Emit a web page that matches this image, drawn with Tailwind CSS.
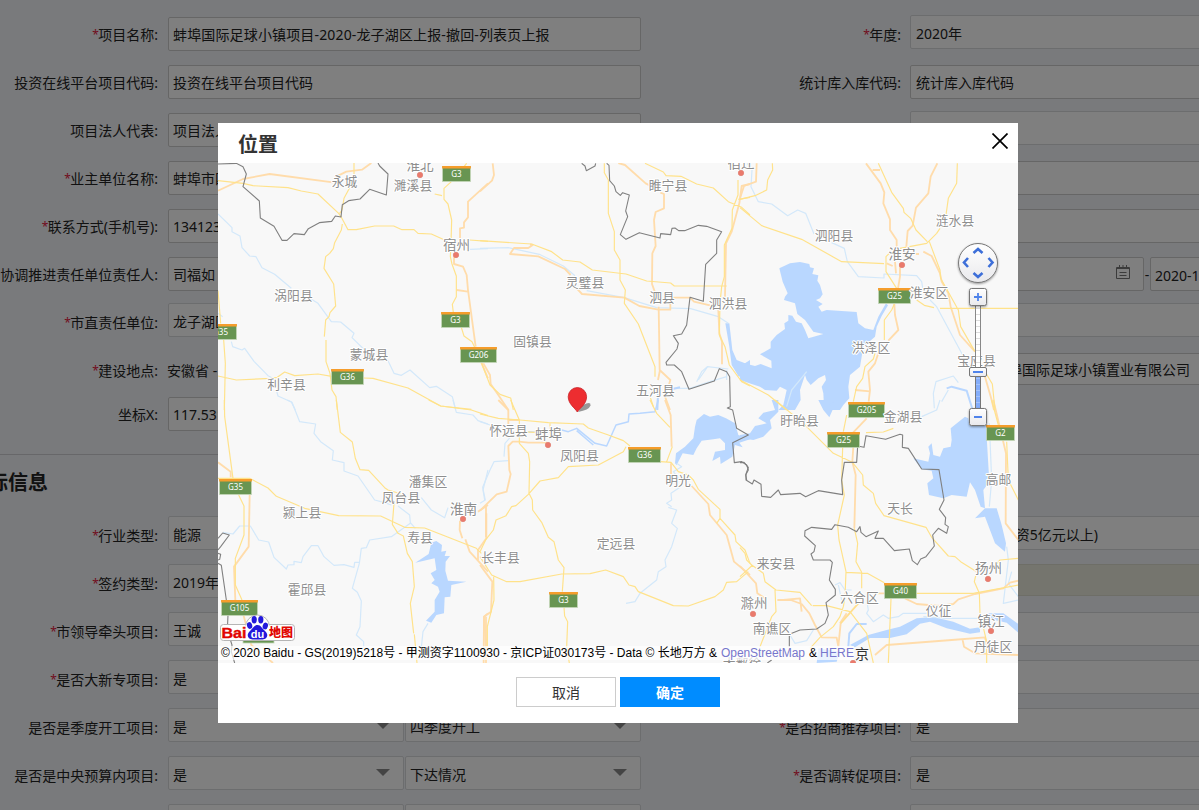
<!DOCTYPE html>
<html lang="zh-CN">
<head>
<meta charset="utf-8">
<title>位置</title>
<script src="https://cdn.jsdelivr.net/npm/@tailwindcss/browser@4"></script>
</head>
<body class="h-[810px] w-[1199px] overflow-hidden bg-[#f3f5f8] font-['Noto_Sans','Noto_Sans_CJK_SC',sans-serif] text-[14px] leading-[20px] text-[#222]">
<main class="flex h-[810px] overflow-hidden [&_i]:w-[6px] [&_i]:text-[12px] [&_label]:translate-y-px">
  <section class="flex w-[641px] shrink-0 flex-col">
    <div class="mt-[17px] flex h-[34px] shrink-0 items-center gap-[10px]"><label class="flex w-[158px] shrink-0 justify-end whitespace-nowrap"><i class="not-italic text-[#e3173e]">*</i>项目名称:</label><div class="flex h-full flex-1 items-center rounded-[2px] border border-[#ccc] bg-white px-[4px] pt-[2px]"><span class="tracking-[0.15px]">蚌埠国际足球小镇项目-2020-龙子湖区上报-撤回-列表页上报</span></div></div>
    <div class="mt-[14px] flex h-[34px] shrink-0 items-center gap-[10px]"><label class="flex w-[158px] shrink-0 justify-end whitespace-nowrap">投资在线平台项目代码:</label><div class="flex h-full flex-1 items-center rounded-[2px] border border-[#ccc] bg-white px-[4px] pt-[2px]">投资在线平台项目代码</div></div>
    <div class="mt-[14px] flex h-[34px] shrink-0 items-center gap-[10px]"><label class="flex w-[158px] shrink-0 justify-end whitespace-nowrap">项目法人代表:</label><div class="flex h-full flex-1 items-center rounded-[2px] border border-[#ccc] bg-white px-[4px] pt-[2px]">项目法人代表</div></div>
    <div class="mt-[14px] flex h-[34px] shrink-0 items-center gap-[10px]"><label class="flex w-[158px] shrink-0 justify-end whitespace-nowrap"><i class="not-italic text-[#e3173e]">*</i>业主单位名称:</label><div class="flex h-full flex-1 items-center rounded-[2px] border border-[#ccc] bg-white px-[4px] pt-[2px]">蚌埠市四季</div></div>
    <div class="mt-[14px] flex h-[34px] shrink-0 items-center gap-[10px]"><label class="flex w-[158px] shrink-0 justify-end whitespace-nowrap"><i class="not-italic text-[#e3173e]">*</i>联系方式(手机号):</label><div class="flex h-full flex-1 items-center rounded-[2px] border border-[#ccc] bg-white px-[4px] pt-[2px]">13412345678</div></div>
    <div class="mt-[14px] flex h-[34px] shrink-0 items-center gap-[10px]"><label class="flex w-[158px] shrink-0 justify-end whitespace-nowrap">协调推进责任单位责任人:</label><div class="flex h-full flex-1 items-center rounded-[2px] border border-[#ccc] bg-white px-[4px] pt-[2px]">司福如</div></div>
    <div class="mt-[12px] flex h-[34px] shrink-0 items-center gap-[10px]"><label class="flex w-[158px] shrink-0 justify-end whitespace-nowrap pt-[3px]"><i class="not-italic text-[#e3173e]">*</i>市直责任单位:</label><div class="flex h-full flex-1 items-center rounded-[2px] border border-[#d8dadd] bg-white px-[4px] pt-[3px]">龙子湖区</div></div>
    <div class="mt-[23px] flex h-[20px] shrink-0 items-center gap-[9px]"><label class="flex w-[158px] shrink-0 justify-end whitespace-nowrap"><i class="not-italic text-[#e3173e]">*</i>建设地点:</label><span class="translate-y-px">安徽省 - 蚌埠市</span></div>
    <div class="mt-[17px] flex h-[34px] shrink-0 items-center gap-[10px]"><label class="flex w-[158px] shrink-0 justify-end whitespace-nowrap">坐标X:</label><div class="flex h-full flex-1 items-center rounded-[2px] border border-[#ccc] bg-white px-[4px] pt-[2px]">117.531</div></div>
    <h2 class="mt-[23px] h-[62px] shrink-0 border-t border-[#cfcfd2] pt-[18px] text-[20px] font-bold leading-[20px]"><span class="-ml-[12px]">标信息</span></h2>
    <div class="flex h-[34px] shrink-0 items-center gap-[10px]"><label class="flex w-[158px] shrink-0 justify-end whitespace-nowrap pt-[3px]"><i class="not-italic text-[#e3173e]">*</i>行业类型:</label><div class="flex h-full flex-1 items-center rounded-[2px] border border-[#d8dadd] bg-white px-[4px] pt-[4px]">能源</div></div>
    <div class="mt-[14px] flex h-[34px] shrink-0 items-center gap-[10px]"><label class="flex w-[158px] shrink-0 justify-end whitespace-nowrap pt-[3px]"><i class="not-italic text-[#e3173e]">*</i>签约类型:</label><div class="flex h-full flex-1 items-center rounded-[2px] border border-[#d8dadd] bg-white px-[4px] pt-[4px]">2019年</div></div>
    <div class="mt-[14px] flex h-[34px] shrink-0 items-center gap-[10px]"><label class="flex w-[158px] shrink-0 justify-end whitespace-nowrap pt-[3px]"><i class="not-italic text-[#e3173e]">*</i>市领导牵头项目:</label><div class="flex h-full flex-1 items-center rounded-[2px] border border-[#d8dadd] bg-white px-[4px] pt-[4px]">王诚</div></div>
    <div class="mt-[14px] flex h-[34px] shrink-0 items-center gap-[10px]"><label class="flex w-[158px] shrink-0 justify-end whitespace-nowrap pt-[3px]"><i class="not-italic text-[#e3173e]">*</i>是否大新专项目:</label><div class="flex h-full flex-1 items-center rounded-[2px] border border-[#d8dadd] bg-white px-[4px] pt-[4px]">是</div></div>
    <div class="mt-[14px] flex h-[34px] shrink-0 items-center gap-[10px]"><label class="flex w-[158px] shrink-0 justify-end whitespace-nowrap pt-[3px]">是否是季度开工项目:</label>
      <div class="flex h-full flex-1 gap-[1px]">
        <div class="flex h-full flex-1 items-center justify-between rounded-[2px] border border-[#d8dadd] bg-white pl-[4px] pr-[13px]"><span class="pt-[4px]">是</span><svg class="h-[7px] w-[14px]" viewBox="0 0 14 7"><path d="M0 0H14L7 7Z" fill="#888"/></svg></div>
        <div class="flex h-full flex-1 items-center justify-between rounded-[2px] border border-[#d8dadd] bg-white pl-[4px] pr-[13px]"><span class="pt-[4px]">四季度开工</span><svg class="h-[7px] w-[14px]" viewBox="0 0 14 7"><path d="M0 0H14L7 7Z" fill="#888"/></svg></div>
      </div></div>
    <div class="mt-[14px] flex h-[34px] shrink-0 items-center gap-[10px]"><label class="flex w-[158px] shrink-0 justify-end whitespace-nowrap pt-[3px]">是否是中央预算内项目:</label>
      <div class="flex h-full flex-1 gap-[1px]">
        <div class="flex h-full flex-1 items-center justify-between rounded-[2px] border border-[#d8dadd] bg-white pl-[4px] pr-[13px]"><span class="pt-[4px]">是</span><svg class="mb-[1px] h-[7px] w-[14px]" viewBox="0 0 14 7"><path d="M0 0H14L7 7Z" fill="#888"/></svg></div>
        <div class="flex h-full flex-1 items-center justify-between rounded-[2px] border border-[#d8dadd] bg-white pl-[4px] pr-[13px]"><span class="pt-[4px]">下达情况</span><svg class="mb-[1px] h-[7px] w-[14px]" viewBox="0 0 14 7"><path d="M0 0H14L7 7Z" fill="#888"/></svg></div>
      </div></div>
    <div class="mt-[14px] flex h-[34px] shrink-0 gap-[1px] pl-[168px]"><div class="flex-1 rounded-[2px] border border-[#d8dadd] bg-white"></div><div class="flex-1 rounded-[2px] border border-[#d8dadd] bg-white"></div></div>
  </section>

  <section class="flex w-[600px] shrink-0 flex-col">
    <div class="mt-[15px] flex h-[34px] shrink-0 items-center gap-[9px]"><label class="flex w-[260px] shrink-0 justify-end whitespace-nowrap pt-[4px]"><i class="not-italic text-[#e3173e]">*</i>年度:</label><div class="flex h-full flex-1 items-center rounded-[2px] border border-[#d8dadd] bg-white px-[5px] pt-[3px]">2020年</div></div>
    <div class="mt-[16px] flex h-[34px] shrink-0 items-center gap-[9px]"><label class="flex w-[260px] shrink-0 justify-end whitespace-nowrap">统计库入库代码:</label><div class="flex h-full flex-1 items-center rounded-[2px] border border-[#ccc] bg-white px-[5px] pt-[2px]">统计库入库代码</div></div>
    <div class="ml-[269px] mt-[12px] h-[34px] shrink-0 rounded-[2px] border border-[#d8dadd] bg-white"></div>
    <div class="ml-[269px] mt-[16px] h-[34px] shrink-0 rounded-[2px] border border-[#ccc] bg-white"></div>
    <div class="ml-[269px] mt-[14px] h-[34px] shrink-0 rounded-[2px] border border-[#ccc] bg-white"></div>
    <div class="ml-[269px] mt-[14px] flex h-[34px] shrink-0">
      <div class="flex w-[234px] shrink-0 items-center justify-end rounded-[2px] border border-[#ccc] bg-white pb-[5px] pr-[13px]"><svg class="h-[14px] w-[14px]" viewBox="0 0 14 14" fill="none" stroke="#777"><path d="M.5 2.500H13.500V13.500H.5ZM.5 3.500H13.500M3.500 0V4M7 0V3M10.500 0V4M3.500 7.500H10.500M3.500 10.500H10.500"/></svg></div>
      <span class="w-[6px] shrink-0 pt-[8px] text-center">-</span>
      <div class="flex w-[235px] shrink-0 items-center rounded-[2px] border border-[#ccc] bg-white px-[4px] pt-[4px]">2020-12-31</div>
    </div>
    <div class="ml-[269px] mt-[12px] h-[34px] shrink-0 rounded-[2px] border border-[#d8dadd] bg-white"></div>
    <div class="ml-[269px] mt-[16px] flex h-[32px] shrink-0 items-center justify-end rounded-[2px] border border-[#ccc] bg-white pr-[50px] pt-[2px]">蚌埠国际足球小镇置业有限公司</div>
    <div class="mt-[69px] h-[62px] shrink-0 border-t border-[#cfcfd2]"></div>
    <div class="ml-[269px] flex h-[34px] shrink-0 items-center justify-end rounded-[2px] border border-[#d8dadd] bg-white pr-[142px] pt-[4px]">(总投资5亿元以上)</div>
    <div class="ml-[269px] mt-[14px] h-[32px] shrink-0 border border-[#dcdccf] bg-[#ebebdd]"></div>
    <div class="ml-[269px] mt-[16px] h-[34px] shrink-0 border border-[#d8dadd] bg-white"></div>
    <div class="ml-[269px] mt-[14px] h-[34px] shrink-0 border border-[#d8dadd] bg-white"></div>
    <div class="mt-[14px] flex h-[34px] shrink-0 items-center gap-[9px]"><label class="flex w-[260px] shrink-0 justify-end whitespace-nowrap pt-[3px]"><i class="not-italic text-[#e3173e]">*</i>是否招商推荐项目:</label><div class="flex h-full flex-1 items-center rounded-[2px] border border-[#d8dadd] bg-white px-[5px] pt-[4px]">是</div></div>
    <div class="mt-[14px] flex h-[34px] shrink-0 items-center gap-[9px]"><label class="flex w-[260px] shrink-0 justify-end whitespace-nowrap pt-[3px]"><i class="not-italic text-[#e3173e]">*</i>是否调转促项目:</label><div class="flex h-full flex-1 items-center rounded-[2px] border border-[#d8dadd] bg-white px-[5px] pt-[4px]">是</div></div>
    <div class="ml-[269px] mt-[14px] h-[34px] shrink-0 rounded-[2px] border border-[#d8dadd] bg-white"></div>
  </section>
</main>

<div class="fixed inset-0 bg-black/50 pl-[218px] pt-[123px]">
  <div class="flex h-[600px] w-[800px] flex-col bg-white">
    <header class="flex h-[40px] shrink-0 items-center justify-between pl-[20px] pr-[10px]">
      <h1 class="pt-[4px] text-[20px] font-bold leading-[30px] text-[#333]">位置</h1>
      <svg class="mb-[4px] h-[16px] w-[16px]" viewBox="0 0 16 16"><path d="M.5.5L15.5 15.5M15.5.5L.5 15.5" stroke="#000" stroke-width="1.7"/></svg>
    </header>
    <svg class="block h-[500px] w-[800px] shrink-0 font-['Noto_Sans','Noto_Sans_CJK_SC',sans-serif]" viewBox="218 163 800 500">
      <defs>
        <linearGradient id="btn" x2="0" y2="1"><stop offset="0" stop-color="#fff"/><stop offset="1" stop-color="#e9e9ec"/></linearGradient>
        <filter id="sh" x="-30%" y="-30%" width="160%" height="160%"><feDropShadow dx="0" dy="1" stdDeviation="1" flood-opacity=".4"/></filter>
      </defs>
      <rect x="218" y="163" width="800" height="500" fill="#f8f8f8"/>
      <!-- lakes -->
      <g fill="#b9d7ff">
        <path transform="translate(480 160) scale(.33333)" d="M736 490L748 490 757 570 770 600 795 610 810 600V665L775 648 755 615 748 560Z"/>
        <path transform="translate(740 160) scale(.33333)" d="M118 325L150 310 180 306 208 312 210 322 222 325 217 342 235 346 232 362 240 375 248 403 240 415 228 420 248 432 235 440 245 455 260 450 350 456 355 490 375 505 400 510 415 470 438 430 444 436 425 468 410 500 405 530 370 560 365 590 360 620 330 645 325 680 328 715 310 735 300 750 260 750 252 740 250 700 245 680 258 660 255 645 235 655 212 675 200 660 195 645 180 690 182 720 165 750 115 750 130 735 140 690 120 680 110 692 75 690 60 680 35 672 0 660V607L45 618 62 612 95 625 94 602 60 583 92 565 92 545 110 525 135 507 133 490 145 482 145 465 157 467 168 485 185 490 195 510 205 535 250 522 220 515 195 480 172 462 165 430 132 420 135 410 143 400 128 365Z"/>
        <path transform="translate(218 400) scale(.33333)" d="M640 428L655 423 672 435 670 455 685 452 680 468 696 468 683 485 682 512 690 542 745 545 700 555 697 590 680 592 678 640 655 645 640 668 624 662 650 635 650 600 665 575 660 560 640 550 650 540 638 520 655 510 650 475 592 488 632 462Z"/>
        <path transform="translate(480 400) scale(.33333)" d="M585 190L588 160 615 140 640 115 645 80 650 60 672 42 690 50 715 45 738 55 765 70 775 105 810 118 778 128 788 142 765 135 757 170 722 192 720 170 697 183 705 155 735 150 735 130 720 115 700 118 665 122 650 145 640 165 608 160 590 195Z"/>
        <g transform="translate(740 400) scale(.33333)">
          <path d="M115 0L115 35 90 60 95 85 70 110 40 120 0 115V105L30 100 45 78 80 70 55 55 70 38 105 30 95 0ZM235 0H290L268 15 280 25 268 52 250 30Z"/>
          <path d="M520 175L565 185 570 160 565 140 575 130 580 165 600 170 610 145 632 140 635 120 632 85 675 50 685 55 688 75 740 78 740 110 748 245 730 270 735 325 722 320 705 270 690 247 680 290 635 285 610 295 567 285 562 250 580 235 575 212 545 208ZM735 325L770 325 785 375 798 430 795 455 765 430 735 350 705 355Z"/>
          <path d="M330 735L385 705 440 690 480 680 530 655 580 651 640 665 690 686 720 682 720 697 690 701 620 685 570 665 540 671 500 703 450 714 390 714 345 742ZM745 640L790 640 835 672V698L800 668 740 655ZM235 745L300 755 290 785 230 789Z"/>
        </g>
      </g>
      <!-- rivers -->
      <g fill="none" stroke="#d3e8fa" stroke-width="3.600" stroke-linejoin="round">
        <path transform="translate(218 160) scale(.33333)" d="M0 162L42 203V215L66 228 72 263 95 288 114 290 132 323 170 343 220 385M270 412L300 430 340 485 368 486 408 520 402 533 440 570M508 598L528 640 550 646 576 630 635 683 655 679 703 710 712 745M0 460L14 470M40 545L44 560 72 570 80 565 108 604 150 647 165 655M175 690L180 708 220 726 232 750M755 268L810 266"/>
        <path transform="translate(480 160) scale(.33333)" d="M0 265L85 263 178 283 250 318 285 347M320 392L433 413 530 443 632 446 715 470 745 490M650 665L665 635 682 620 745 627M655 660L683 620M575 685L630 685 690 665 740 650M740 630V660M535 700L530 740"/>
        <path transform="translate(740 160) scale(.33333)" d="M22 10L36 30 33 80 55 125 95 132 143 167 173 150 197 160 222 222M275 248L313 265 322 305 355 350 432 354V342L530 347 545 365 550 395M570 420L590 440 665 580 690 625 695 650M583 745L580 700 588 665 640 648 655 668M605 725L625 690M200 635L180 660 155 690 140 740"/>
        <path transform="translate(218 400) scale(.33333)" d="M208 0L222 7 245 65 293 72 288 100 308 125 346 152 343 180 378 188V213L420 228 470 300 500 308 520 315M540 318L575 345 577 368 592 385M577 370L520 410 455 420 445 443 430 445 424 490 403 565 418 577 430 603 426 680 415 705 437 725V742M15 397L45 402 65 378H97L122 420 152 426 168 472 205 507 210 495 228 494V484L250 488 255 470 280 437H300L318 470 348 496 378 494 408 502 410 487H424M705 0L715 37 765 45 780 62 810 72M610 293L640 330 680 353 690 323M810 210L795 270 800 300M630 670L615 695 610 742"/>
        <path transform="translate(480 400) scale(.33333)" d="M0 65L30 75M85 182L42 185 30 210 8 262 16 300 0 310M72 170L75 130 90 113M600 262L573 280 575 300 560 310 575 320M565 322L590 330 575 370 592 385 575 440 555 480 558 500 535 515 530 540 480 580 465 605 438 610M590 190L605 200 580 215 600 240"/>
        <path transform="translate(740 400) scale(.33333)" d="M285 555L300 548 315 570 335 570M295 555L305 600M380 600L385 630 380 640 400 665 430 645 445 655 475 650 490 640 560 640M748 70L755 240 748 320M800 440L805 480 790 610 835 600M815 515L805 550 835 590M550 650L620 655 720 655M150 705L165 730 200 722 220 690M545 50L590 30 600 0"/>
        <g stroke="#b9d7ff" stroke-width="6">
          <path transform="translate(740 160) scale(.33333)" d="M620 685L635 680 680 692 698 750"/>
          <path transform="translate(480 160) scale(.33333)" d="M535 680L532 750M575 688L600 682"/>
          <path transform="translate(480 400) scale(.33333)" stroke-width="4.500" d="M140 95L165 97M245 90L265 95 290 85 345 130 380 138 408 75 445 65 447 42 480 40 525 35 535 0M290 92L340 135"/>
          <path transform="translate(740 400) scale(.33333)" d="M325 740L328 700 350 672 380 672"/>
        </g>
      </g>
      <!-- trunk roads -->
      <g fill="none" stroke="#ffdcab" stroke-width="5.500" stroke-linejoin="round">
        <path transform="translate(218 160) scale(.33333)" d="M0 92L75 57 155 42 345 67M350 52L385 35 432 29 460 9M810 70L750 125V172L738 187V203L726 205V245M708 290V312L735 320 746 345 750 390 773 560M716 390L750 395M790 608L810 655"/>
        <path transform="translate(480 160) scale(.33333)" d="M38 10L42 45 36 62 0 94M415 9L435 15 497 70 510 77M541 98L552 102V145L527 156 522 180 527 258 517 280 516 372 525 397M580 413H630L642 425 690 436M150 253L158 255 145 264H102L90 282 175 289 255 327 272 345M290 385L306 402 433 413 478 438 535 449H571V430M536 440L539 630 571 660 565 680M555 710L570 750M540 630L534 660M810 72L785 78 778 130 755 215 738 250 735 410M715 450L718 520 726 545V613M10 610L30 645 32 672 55 705 85 750"/>
        <path transform="translate(740 160) scale(.33333)" d="M378 10L422 70 433 97 430 130 450 178V210L470 240V270M480 310V350L474 385M398 30H420M592 10L572 50 565 100 528 143 518 197 503 213 499 260M550 275L575 288 600 340 605 365 625 400 632 440 660 525 705 575M440 310L458 318M465 305L468 340M527 282H537M463 432L465 465 475 510 445 542M415 580L405 610 385 635 390 690 386 725M345 690L390 694M50 10L48 65 12 78 0 115M735 650L755 720 762 750"/>
        <path transform="translate(218 400) scale(.33333)" d="M0 187L38 215V232M95 285L92 440 48 500 52 600M75 640L100 735 165 789M780 335L810 315M726 362L725 390 733 415M742 418L755 455 810 515M805 340V415L780 450V480M810 640L798 650 797 789M804 650V789"/>
        <path transform="translate(480 400) scale(.33333)" d="M55 0L85 30V75M200 128L145 128 118 125H98L85 138 88 210 92 222 80 275 50 283 0 332M555 0L572 45 575 140M573 190V222M635 258L685 312 690 345 740 405 762 485 810 525M18 318V412M0 495L37 545 33 635 12 650 18 740M82 60H118"/>
        <path transform="translate(740 400) scale(.33333)" d="M380 55L337 100M340 140L337 185 347 225 343 385M0 498L48 550 52 580 80 598M112 600H152L185 612 208 640 225 675 245 712 290 713 295 740M130 600L180 595 185 635M440 580H412M495 595L530 612 600 618 640 612 655 598 705 582 790 565 810 548 835 542M355 610L302 670 295 740M405 765L440 735 635 720 735 712 740 735M668 720L672 740 705 760 835 765M760 0L798 160 797 370 835 420M300 670L320 640"/>
      </g>
      <!-- expressways -->
      <g fill="none" stroke="#ffe28a" stroke-width="3.500" stroke-linejoin="round">
        <path transform="translate(218 160) scale(.33333)" d="M0 62L75 70 105 77 210 83 250 93 300 102 362 160 370 172 390 209H415L470 198H527L552 209H588L600 220 640 222 680 240M755 240L810 244M408 9V45M395 83L378 115 372 150 365 160M373 192L370 210 350 248 346 266 335 280 323 290 318 325 347 372 353 438 336 458 333 470 323 480 319 530M324 540V605L336 640 342 690 354 710 358 750M700 65L678 85V118L690 132 701 180 699 250 697 290 702 312 715 348V410L703 433 706 458M730 502L738 528 762 545 770 562M650 102L672 107M738 20L746 10M0 392L8 490M17 540L22 610 19 750M0 648L55 660 160 655 178 652 200 636 230 647 300 642 345 650M437 654L465 655 570 684 668 738 760 748"/>
        <path transform="translate(480 160) scale(.33333)" d="M0 242L155 252 215 275 248 300 300 306 337 330 438 342 500 363 572 369 583 378H740M373 10V38L385 60V160L403 215V270L420 300V360L436 390 433 430 475 492 525 620V650M511 712L520 740M495 10L550 36 558 47 603 49 650 72 700 84 745 125 785 142 810 165M774 60V105L757 150 756 205 733 255V350L725 380 720 430 718 525 735 560 748 615 785 665 810 678M5 610L30 675 60 703 92 714 100 750M775 118L810 112"/>
        <path transform="translate(740 160) scale(.33333)" d="M415 10L455 97 490 145 492 157 512 175 528 210 562 245M652 10L650 70 625 115 618 165M600 205L590 220 560 250 480 265M568 245L600 330 602 355 655 450 662 500 705 575M0 143L65 197 185 238 305 305 432 311M450 278L438 290V335L470 385M530 420L553 436 582 443M600 445H835M463 432L455 450 433 480V540M405 580L400 597 375 620 368 655 350 680 340 725M97 10L98 30 83 60 80 90 45 107 0 118M738 640L757 672 765 750M0 660L85 705 140 750"/>
        <path transform="translate(218 400) scale(.33333)" d="M19 0L20 50 45 235M0 235H95L150 264 175 289 260 325 362 347 488 348 560 382 620 384 775 445 790 460M62 285L78 318V405L52 475V555L72 600M355 0L367 97 403 126 412 175 426 209 452 211 500 263 510 270 550 282M528 310L523 373 540 400 556 408 568 460 583 485 589 560 577 610 587 700M589 703L597 789M632 0L668 18 760 30 810 47"/>
        <path transform="translate(480 400) scale(.33333)" d="M0 42L55 55 120 60 205 68 310 72 325 84 385 105 430 122 450 138M92 0L118 60V130L145 160 149 185 147 280 157 300 158 330 185 367 205 412 222 425 235 480 252 503 247 575M438 140L430 155 355 195 265 200 235 233 180 243 145 283 108 317 95 320 78 347 48 360 40 390 18 418 0 455M252 622L254 648 263 665 260 740 268 789M210 68V100M542 185L573 187 595 215 625 225 640 240 655 268 720 328V355L765 405 768 425 795 450 810 490M510 0L530 40 570 82M577 140L560 185M720 355L710 370M0 470L35 525 80 545H120L245 522 330 521 377 510 430 530 447 555 465 560 475 575 580 617 625 618 705 590 730 570 740 547 770 545 805 515M41 530L42 600 22 680V740M120 95L165 97"/>
        <path transform="translate(740 400) scale(.33333)" d="M105 0L190 70 280 160 337 187 368 225 370 255 400 280 407 310 432 347 558 382 575 412 625 468 645 470 662 485 710 515 703 545 718 580 720 640 740 725V789M320 45L310 95M308 142L305 240 313 285 293 375 297 420 318 515 315 590 310 620 300 650 280 680 240 712 210 745M343 385L353 430 348 485 365 517V565M318 517L382 520 433 548M530 580H700L835 555M453 597L445 789M378 98L430 96 460 85M0 443L15 460 20 480 35 495 70 520 75 545 108 570 180 577 215 617M38 495L0 530M105 570L108 635 95 650 60 740M218 617H260L330 635 380 700 400 789M755 0L775 75M800 125L805 240 835 300M835 475L780 480 755 510M355 610L302 670"/>
      </g>
      <!-- province borders -->
      <g fill="none" stroke="#808080" stroke-width="3.300" stroke-linejoin="round">
        <path transform="translate(218 160) scale(.33333)" d="M0 12L55 10 75 20 85 42 75 80 124 123 127 174 168 199 192 241 207 241 228 221 259 224 271 206 304 188 341 184 352 168 369 171 373 134 392 122 426 117 455 88 505 105 510 42 485 18 480 9"/>
        <path transform="translate(480 160) scale(.33333)" d="M305 10L315 18 319 32 345 18 347 10M380 10L387 16 389 62 403 78 408 95 421 106 428 98 448 105 437 153 443 170 421 224 438 238 478 218 540 234 542 221 572 224 576 205 585 204 596 212H614L655 196 680 199 725 215 710 240V280L677 313 670 424 630 412 620 495 605 522 580 527 595 550 591 567 558 607 560 615H583L605 635 627 688 703 663 718 626 740 635 749 650 751 740 742 744 758 750 770 805 805 825 758 848 763 908 785 905 800 915 805 930 797 945 800 960"/>
        <path transform="translate(218 400) scale(.33333)" d="M0 415L14 399 34 405 8 440 0 450M0 460L8 463 5 478 0 480M0 490L10 496 25 600M30 645L28 690 42 735 40 755 50 789"/>
        <path transform="translate(740 400) scale(.33333)" d="M0 188L12 187 25 202 18 222 18 240 37 252 42 240 63 253 65 289 92 292 115 270 122 284 180 280 197 290 235 272 308 284 305 240 313 187 350 187 353 138 372 142 378 107 437 118 480 103 488 105 487 142 505 145 545 207 597 209 612 300 598 328 617 353 615 373 625 380 620 400 595 385 578 405 583 438 558 470 542 477 532 494 517 482 508 447 463 452 430 415 405 415 415 393 378 410 363 397 360 380 350 395 325 382 285 374 275 388 215 382 195 392 194 408 226 437 222 455 213 462 220 480 270 480 277 487 268 540 286 568V585L258 608 265 645 255 670 230 687 180 690 148 703V740M95 780L82 789"/>
      </g>
      <!-- road shields -->
      <g id="shields" font-size="8" fill="#fff" text-anchor="middle"></g>
      <!-- place names -->
      <g id="places" font-size="12.8" fill="#8e8e8e" text-anchor="middle" stroke="#fff" stroke-width="2" paint-order="stroke" stroke-linejoin="round"></g>
      <!-- marker -->
      <path d="M578 412L583 405Q591 401 590.500 405.500Q589 410 578 412Z" fill="#777" opacity=".75"/>
      <path d="M577.3 412C575 408 568.2 404 568.2 396.700A9.200 9.200 0 0 1 586.600 396.700C586.600 404 580 408 577.300 412Z" fill="#ed2d30" stroke="#c91f25" stroke-width=".8"/>
      <!-- attribution -->
      <rect x="218" y="646" width="636" height="14" fill="#fff" opacity=".7"/>
      <g class="font-['Liberation_Sans','Noto_Sans_CJK_SC',sans-serif]" font-size="12" fill="#000">
        <text x="221" y="657" textLength="496">© 2020 Baidu - GS(2019)5218号 - 甲测资字1100930 - 京ICP证030173号 - Data © 长地万方 &amp;</text>
        <text x="721" y="657" textLength="84" fill="#7777cc">OpenStreetMap</text>
        <text x="809" y="657">&amp;</text>
        <text x="820" y="657" textLength="34" fill="#7777cc">HERE</text>
        <text x="855" y="658.500" font-size="14" fill="#333">京</text>
      </g>
      <!-- Baidu map logo -->
      <g>
        <g fill="#fff" stroke="#b5b5b5" stroke-width="1"><rect x="220.500" y="624.500" width="74" height="16" rx="3"/><circle cx="257.500" cy="627" r="12"/></g>
        <rect x="222" y="625.500" width="71" height="14" rx="2" fill="#fff"/>
        <text x="221.500" y="637.500" class="font-['Liberation_Sans',sans-serif]" font-size="15" font-weight="700" fill="#e10601" stroke="#e10601" stroke-width=".4" textLength="25" lengthAdjust="spacingAndGlyphs">Bai</text>
        <g fill="#2319dc"><ellipse cx="249.600" cy="625.500" rx="2.600" ry="3.400" transform="rotate(-15 249.600 625.500)"/><ellipse cx="254.200" cy="619.700" rx="2.600" ry="3.700"/><ellipse cx="260.800" cy="619.700" rx="2.600" ry="3.700"/><ellipse cx="265.300" cy="626" rx="2.600" ry="3.400" transform="rotate(15 265.300 626)"/>
        <path d="M257.500 625C261 625 262 628.500 265.500 631.500C269 635 267 639.500 262.500 639.500H252.500C248 639.500 246 635 249.500 631.500C253 628.500 254 625 257.500 625Z"/></g>
        <text x="257.500" y="637.500" class="font-['Liberation_Sans',sans-serif]" text-anchor="middle" font-size="11" font-weight="700" fill="#fff">du</text>
        <text x="269" y="637" class="font-['Noto_Sans_CJK_SC',sans-serif]" font-size="12" font-weight="900" fill="#e10601">地图</text>
      </g>
      <!-- pan and zoom controls -->
      <circle cx="978" cy="263" r="19.500" fill="url(#btn)" stroke="#777" filter="url(#sh)"/>
      <path d="M973.500 253L978 249 982.500 253M973.500 273L978 277 982.500 273M968 258L964 262.500 968 267M988.500 258L992.500 262.500 988.500 267" fill="none" stroke="#3d6fd9" stroke-width="2.600"/>
      <rect x="975.500" y="305" width="5" height="66" fill="#fff" stroke="#888"/>
      <rect x="975.500" y="372" width="5" height="38" fill="#84adfa" stroke="#777"/>
      <path d="M978 308V370" stroke="#ddd" stroke-width="4" stroke-dasharray="1 5"/>
      <path d="M978 378V408" stroke="#a3c2fb" stroke-width="4" stroke-dasharray="1 5"/>
      <g fill="url(#btn)" stroke="#777"><rect x="969.500" y="288.500" width="17" height="17" rx="2" filter="url(#sh)"/><rect x="969.500" y="367.500" width="17" height="9" rx="1.500"/><rect x="969.500" y="408.500" width="17" height="17" rx="2" filter="url(#sh)"/></g>
      <path d="M974 297H982M978 293V301M973 372H983M974 417H982" stroke="#4f83ea" stroke-width="1.800"/>
    </svg>
    <footer class="flex flex-1 items-start justify-center gap-[4px] pt-[14px]">
      <button class="h-[30px] w-[100px] border border-[#ccc] bg-white pt-[1px] text-[14px] leading-[28px] text-[#333]">取消</button>
      <button class="h-[30px] w-[100px] bg-[#008cff] pt-[1px] text-[14px] font-bold leading-[29px] text-white">确定</button>
    </footer>
  </div>
</div>
<script>
// shield: text, left, top, width
const shields = [['G3',442.5,166.5,28],['G3',441.5,312.5,28],['G206',460.5,347.5,36],['G36',331.5,369.5,32],['G35',204.5,324.5,32],['G35',219.5,479.5,32],['G105',221.5,600.5,36],['',243,628,31],['G36',628.5,447.5,32],['G3',549.5,592.5,28],['G25',878.5,288.5,32],['G205',848.5,402.5,36],['G25',827.5,432.5,32],['G2',986.5,425.5,28],['G40',884.5,583.5,32]];
document.getElementById('shields').innerHTML = shields.map(([t,x,y,w]) =>
  `<rect x="${x}" y="${y}" width="${w}" height="15" fill="#689552" stroke="#c4d6b8" stroke-width=".8"/><rect x="${x-.4}" y="${y-.5}" width="${w+.8}" height="2.5" fill="#f59d2c"/><text x="${x+w/2}" y="${y+10.8}">${t}</text>`).join('');
// place: name, centre x, centre y
const places = [['淮北',420,165.5],['永城',344.5,182],['濉溪县',413,185.5],['宿州',456.5,245.5],['涡阳县',293.5,295.5],['蒙城县',369,354.5],['利辛县',286.5,384.5],['睢宁县',668,186],['宿迁',741,164],['灵璧县',585,283],['泗县',662,298],['泗洪县',728,304],['固镇县',532.5,341.5],['五河县',655.5,390.5],['涟水县',955,220.5],['泗阳县',834,236],['淮安',902,255],['淮安区',929,293],['洪泽区',871,347.5],['宝应县',976.5,361],['潘集区',428,482],['凤台县',401,498],['颍上县',302,512.5],['淮南',463.5,509.5],['寿县',420,537.5],['长丰县',500.5,557.5],['霍邱县',307,589.5],['怀远县',508.5,431],['蚌埠',548.5,434.5],['凤阳县',579.5,455.5],['明光',678,480.5],['定远县',616,544],['盱眙县',799.5,420.5],['金湖县',903,416.5],['高邮',998.5,479.5],['天长',900,509],['来安县',776,564],['扬州',988.5,568.5],['滁州',754,604],['六合区',859.5,597.5],['仪征',938.5,610.5],['南谯区',772,628.5],['镇江',991,621.5],['丹徒区',993,646.5],['大鄱徐',742,664]];
const cities = [[420,175],[456,255],[741,173],[902,265],[463,519],[548,445],[753,614],[988,579],[991,631],[853,663]];
const large = ['淮北','宿州','宿迁','淮安','淮南','蚌埠','扬州','滁州','镇江'];
document.getElementById('places').innerHTML = places.map(([t,x,y]) => `<text x="${x}" y="${y+4.3}" font-size="${large.includes(t) ? 13.6 : 12.8}">${t}</text>`).join('')
  + cities.map(([x,y]) => `<circle cx="${x}" cy="${y}" r="2.7" fill="#ea7a6c" stroke="#c96a5e" stroke-width=".6"/>`).join('');
</script>
</body>
</html>
